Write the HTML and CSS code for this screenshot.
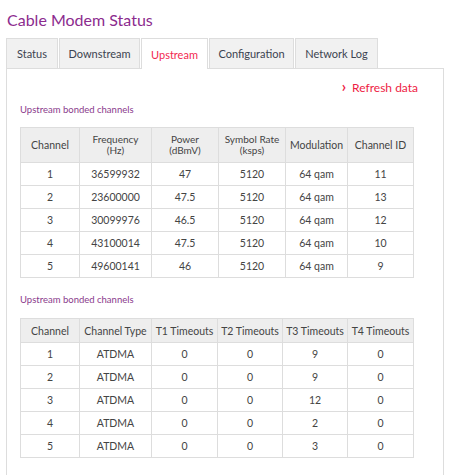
FILE: index.html
```html
<!DOCTYPE html>
<html>
<head>
<meta charset="utf-8">
<link rel="stylesheet" href="styles.css">
</head>
<body>
<div class="page">
  <h1 class="title">Cable Modem Status</h1>
  <div class="tabs">
    <div class="tab t-status">Status</div>
    <div class="tab t-down">Downstream</div>
    <div class="tab t-up active">Upstream</div>
    <div class="tab t-conf">Configuration</div>
    <div class="tab t-log">Network Log</div>
  </div>
  <div class="panel">
    <div class="refresh"><span class="chev">&#8250;</span>Refresh data</div>
    <div class="section">Upstream bonded channels</div>
    <table class="grid g1">
      <colgroup><col class="c1"><col class="c2"><col class="c3"><col class="c4"><col class="c5"><col class="c6"></colgroup>
      <thead>
        <tr><th>Channel</th><th><span class="l">Frequency</span><span class="l">(Hz)</span></th><th><span class="l">Power</span><span class="l">(dBmV)</span></th><th><span class="l">Symbol Rate</span><span class="l">(ksps)</span></th><th>Modulation</th><th>Channel ID</th></tr>
      </thead>
      <tbody>
        <tr><td>1</td><td>36599932</td><td>47</td><td>5120</td><td>64 qam</td><td>11</td></tr>
        <tr><td>2</td><td>23600000</td><td>47.5</td><td>5120</td><td>64 qam</td><td>13</td></tr>
        <tr><td>3</td><td>30099976</td><td>46.5</td><td>5120</td><td>64 qam</td><td>12</td></tr>
        <tr><td>4</td><td>43100014</td><td>47.5</td><td>5120</td><td>64 qam</td><td>10</td></tr>
        <tr><td>5</td><td>49600141</td><td>46</td><td>5120</td><td>64 qam</td><td>9</td></tr>
      </tbody>
    </table>
    <div class="section s2">Upstream bonded channels</div>
    <table class="grid g2">
      <colgroup><col class="d1"><col class="d2"><col class="d3"><col class="d4"><col class="d5"><col class="d6"></colgroup>
      <thead>
        <tr><th>Channel</th><th>Channel Type</th><th>T1 Timeouts</th><th>T2 Timeouts</th><th>T3 Timeouts</th><th>T4 Timeouts</th></tr>
      </thead>
      <tbody>
        <tr><td>1</td><td>ATDMA</td><td>0</td><td>0</td><td>9</td><td>0</td></tr>
        <tr><td>2</td><td>ATDMA</td><td>0</td><td>0</td><td>9</td><td>0</td></tr>
        <tr><td>3</td><td>ATDMA</td><td>0</td><td>0</td><td>12</td><td>0</td></tr>
        <tr><td>4</td><td>ATDMA</td><td>0</td><td>0</td><td>2</td><td>0</td></tr>
        <tr><td>5</td><td>ATDMA</td><td>0</td><td>0</td><td>3</td><td>0</td></tr>
      </tbody>
    </table>
  </div>
</div>
</body>
</html>
```
FILE: styles.css
```css
html, body {
  margin: 0;
  padding: 0;
  background: #ffffff;
}
body {
  font-family: "Lato", "Noto Sans", sans-serif;
  color: #444444;
  font-size: 10.5px;
}
.page {
  width: 438px;
  padding-left: 6px;
}
.title {
  margin: 0;
  padding: 10px 0 0 1px;
  height: 38px;
  box-sizing: border-box;
  font-size: 16px;
  font-weight: normal;
  color: #8c2b8e;
  line-height: 20px;
}
.tabs {
  display: flex;
  height: 30px;
  position: relative;
  z-index: 1;
}
.tab {
  box-sizing: border-box;
  height: 30px;
  border: 1px solid #dddddd;
  border-bottom: none;
  background: #f1f1f1;
  color: #3c4350;
  display: flex;
  align-items: center;
  justify-content: center;
  font-size: 11px;
  margin-right: 1px;
}
.tab.active {
  background: #ffffff;
  color: #f2284f;
  height: 31px;
}
.t-status { width: 52px; }
.t-down { width: 81px; }
.t-up { width: 67px; }
.t-conf { width: 85px; }
.t-log { width: 83px; }
.panel {
  border: 1px solid #dddddd;
  border-bottom: none;
  height: 420px;
  box-sizing: border-box;
  padding: 0 29px 0 13px;
}
.refresh {
  text-align: right;
  color: #ee1c44;
  font-size: 12px;
  margin-top: 9px;
  height: 16px;
  line-height: 16px;
  margin-right: -4px;
}
.chev {
  font-weight: bold;
  font-size: 15px;
  margin-right: 6px;
}
.section {
  color: #8a3a8c;
  font-size: 9.5px;
  margin-top: 9px;
  height: 14px;
  line-height: 14px;
}
.section.s2 {
  margin-top: 15px;
}
.grid {
  border-collapse: collapse;
  width: 393px;
  table-layout: fixed;
  margin-top: 10px;
}
.g2 { margin-top: 11px; }
.grid th, .grid td {
  border: 1px solid #dddddd;
  text-align: center;
  padding: 0;
  font-weight: normal;
  font-size: 10.5px;
  color: #444444;
}
.grid th {
  background: #eeeeee;
  line-height: 12px;
}
.grid th .l {
  display: block;
  font-size: 10px;
  line-height: 11px;
  height: 11px;
}
.g1 th { height: 34px; }
.g2 th { height: 23px; }
.grid td { height: 22px; }
.c1 { width: 59px; }
.c2 { width: 72px; }
.c3 { width: 67px; }
.c4 { width: 67px; }
.c5 { width: 62px; }
.c6 { width: 66px; }
.d1 { width: 59px; }
.d2 { width: 72px; }
.d3 { width: 66px; }
.d4 { width: 65px; }
.d5 { width: 65px; }
.d6 { width: 66px; }
```
